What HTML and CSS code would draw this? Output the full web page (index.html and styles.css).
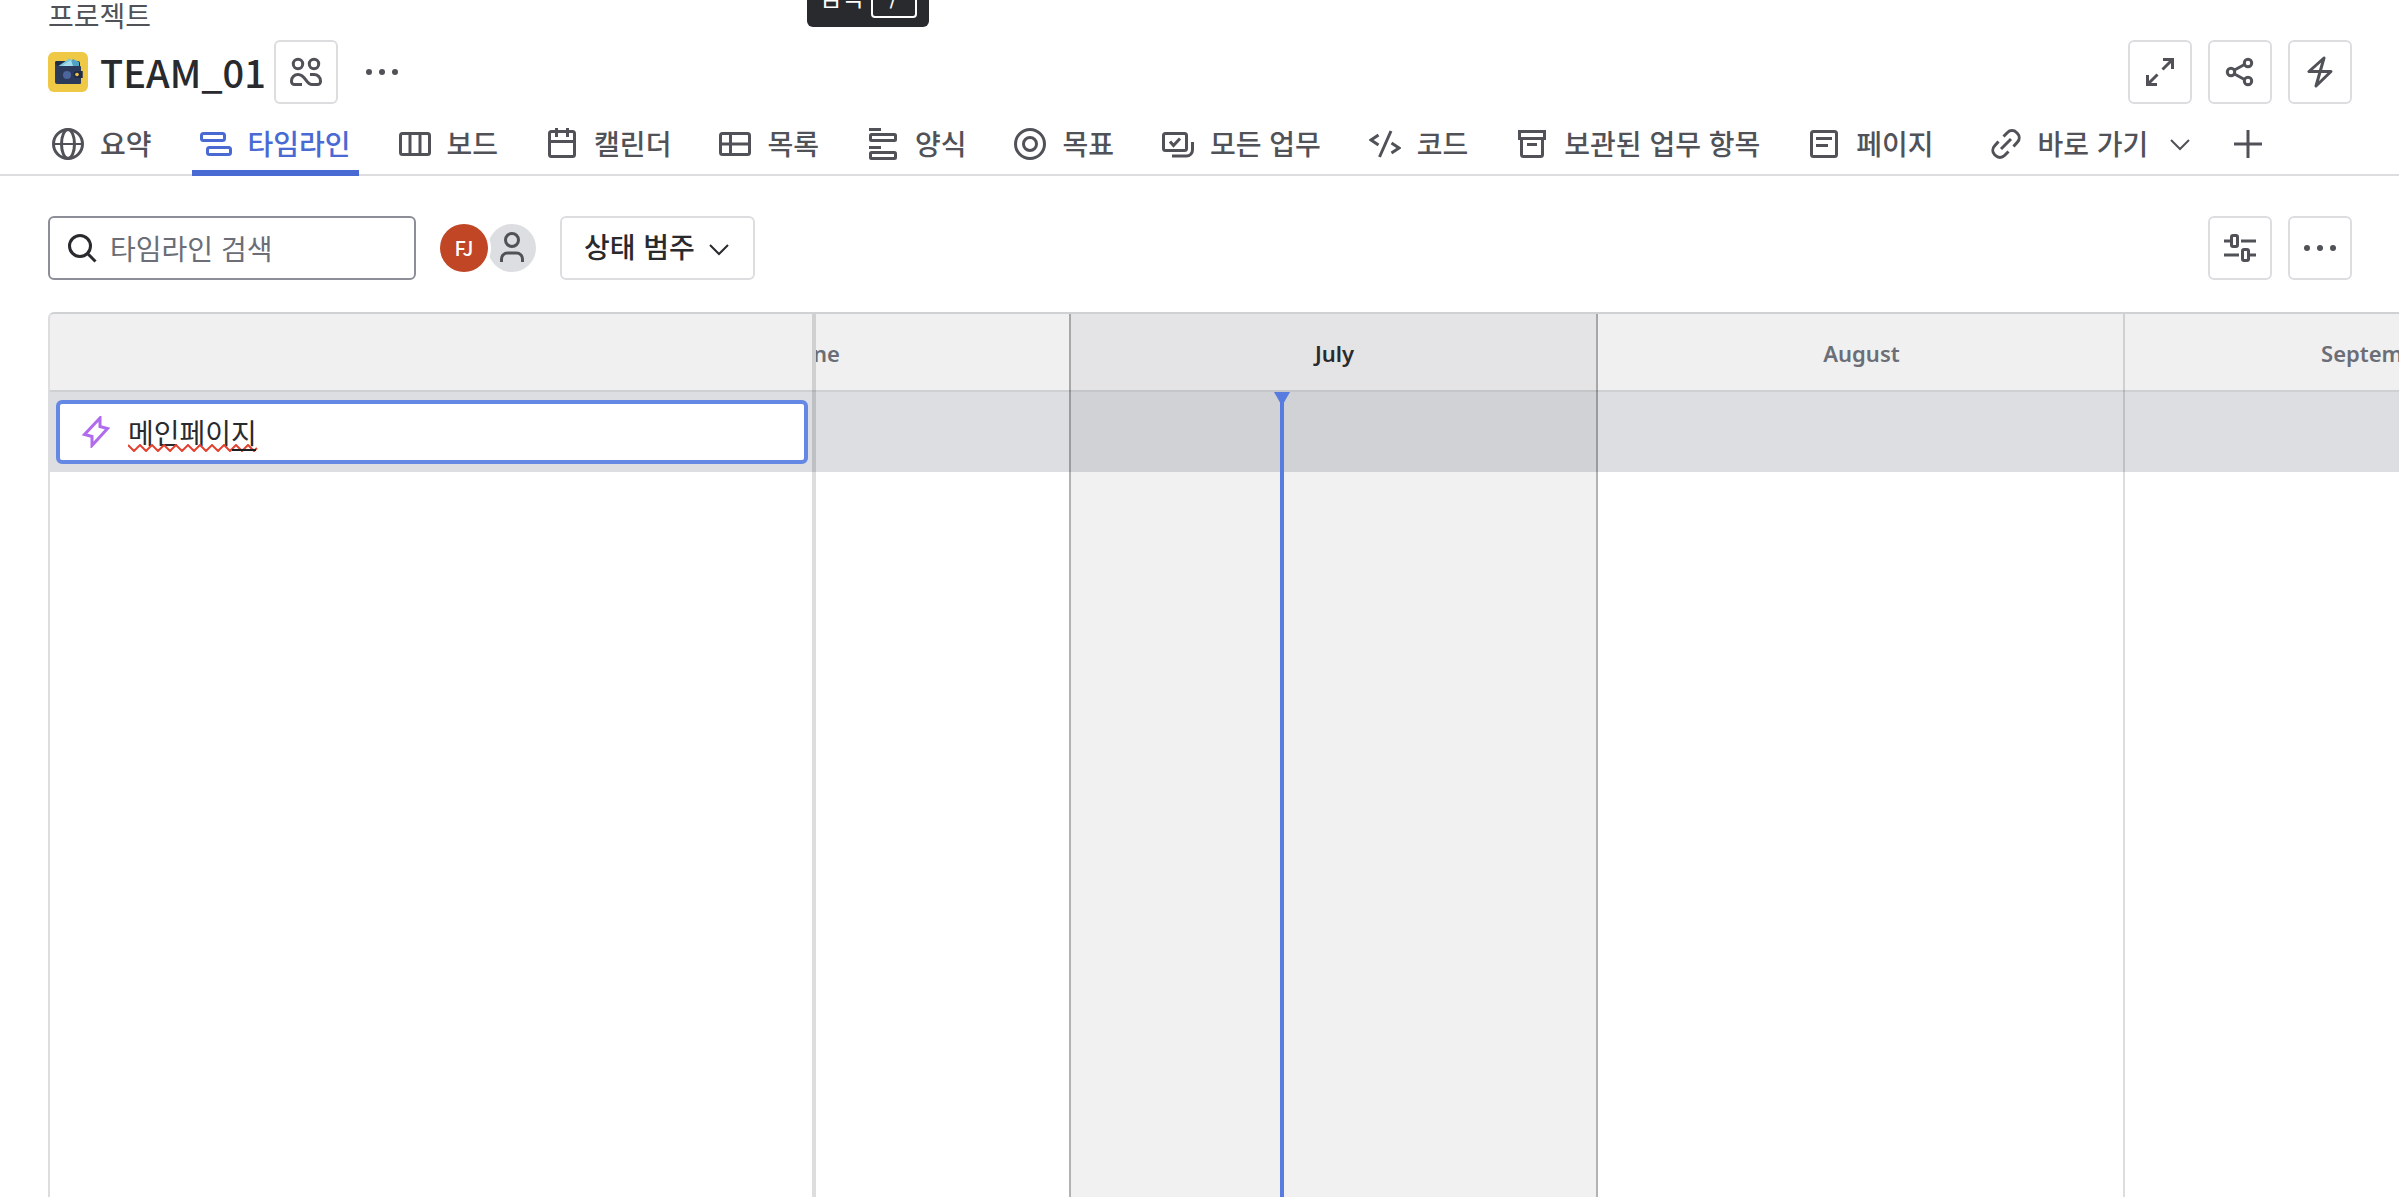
FILE: index.html
```html
<!DOCTYPE html>
<html lang="ko">
<head>
<meta charset="utf-8">
<title>TEAM_01 - 타임라인</title>
<meta name="viewport" content="width=device-width, initial-scale=1">
<link rel="stylesheet" href="styles.css">
</head>
<body>
<div class="page">
  <header class="header">
    <a class="crumb" href="#projects">프로젝트</a>
    <div class="title-row">
      <svg class="logo" viewBox="0 0 40 40" aria-hidden="true">
        <rect width="40" height="40" rx="6" fill="#efc846"/>
        <path d="M8 9h22a2 2 0 0 1 2 2v8H7v-8a2 2 0 0 1 1-2z" fill="#1d2b45"/>
        <path d="M9 15l13-9 3 8z" fill="#7cc5dc"/>
        <path d="M17 14l8-7 6 3v4z" fill="#4fa3c4"/>
        <path d="M14 14l9-6 2 6z" fill="#a5dceb"/>
        <path d="M7 12l3 2h22a1 1 0 0 1 1 1v4h1.500v7H33v5a1 1 0 0 1-1 1H9a2 2 0 0 1-2-2z" fill="#2b3a5b"/>
        <circle cx="19" cy="23" r="4" fill="#4c659c"/>
        <path d="M34.500 19H29a3.500 3.500 0 0 0 0 7h5.500z" fill="#1d2b45"/>
        <circle cx="29" cy="22.500" r="1.800" fill="#f2c14e"/>
      </svg>
      <h1 class="title">TEAM_01</h1>
      <button class="icon-btn" type="button" aria-label="팀">
        <svg class="icon" viewBox="0 0 32 32"><circle cx="8" cy="8" r="4.700"/><circle cx="24" cy="8" r="4.700"/><path d="M12 28.500H4.500a3 3 0 0 1-3-3V25A6.500 6.500 0 0 1 8 18.500c8 0 7.500 10 14 10h5.500a3 3 0 0 0 3-3V25a6.500 6.500 0 0 0-6.500-6.500h-4"/></svg>
      </button>
      <button class="icon-btn plain" type="button" aria-label="더 보기">
        <svg class="icon dots" viewBox="0 0 32 32"><circle cx="3" cy="16" r="3"/><circle cx="16" cy="16" r="3"/><circle cx="29" cy="16" r="3"/></svg>
      </button>
      <div class="actions">
        <button class="icon-btn" type="button" aria-label="전체 화면">
          <svg class="icon" viewBox="0 0 32 32"><path d="M19 3.500h9.500V13M28 4 18.500 13.500M3.500 19v9.500H13M4 28l9.500-9.500"/></svg>
        </button>
        <button class="icon-btn" type="button" aria-label="공유">
          <svg class="icon" viewBox="0 0 32 32"><circle cx="24" cy="7" r="3.700"/><circle cx="7" cy="16" r="3.700"/><circle cx="24" cy="25" r="3.700"/><path d="M10.500 14 20.500 8.500M10.500 18l10 5.500"/></svg>
        </button>
        <button class="icon-btn" type="button" aria-label="자동화">
          <svg class="icon round" viewBox="0 0 32 32"><path d="M20 2 5 15.500h22L12 30z"/></svg>
        </button>
      </div>
    </div>
    <nav class="tabs" aria-label="프로젝트 보기">
      <a class="tab" href="#summary"><svg class="icon" viewBox="0 0 32 32"><circle cx="16" cy="16" r="14.500"/><ellipse cx="16" cy="16" rx="6.500" ry="14.500"/><path class="thin" d="M2 16h28"/></svg>요약</a>
      <a class="tab active" href="#timeline" aria-current="page"><svg class="icon" viewBox="0 0 32 32"><rect x="1.500" y="5.500" width="23" height="7" rx="2"/><rect x="7.500" y="19.500" width="23" height="7" rx="2"/></svg>타임라인</a>
      <a class="tab" href="#board"><svg class="icon" viewBox="0 0 32 32"><rect x="1.500" y="5.500" width="29" height="21" rx="2"/><path d="M11 5v22M21 5v22"/></svg>보드</a>
      <a class="tab" href="#calendar"><svg class="icon" viewBox="0 0 32 32"><rect x="3.500" y="3.500" width="25" height="25" rx="2"/><path d="M10.500 0v9M21.500 0v9M3 13.500h26"/></svg>캘린더</a>
      <a class="tab" href="#list"><svg class="icon" viewBox="0 0 32 32"><rect x="1.500" y="5.500" width="29" height="21" rx="2"/><path d="M11.500 5v22M2 16h28"/></svg>목록</a>
      <a class="tab" href="#forms"><svg class="icon" viewBox="0 0 32 32"><path d="M2 1.500h12M2 19.500h12"/><rect x="3.500" y="6.500" width="25" height="6" rx="1"/><rect x="3.500" y="24.500" width="25" height="6" rx="1"/></svg>양식</a>
      <a class="tab" href="#goals"><svg class="icon" viewBox="0 0 32 32"><circle cx="16" cy="16" r="14.500"/><circle cx="16" cy="16" r="6.500"/></svg>목표</a>
      <a class="tab" href="#all"><svg class="icon" viewBox="0 0 32 32"><rect x="1.500" y="5.500" width="23" height="17" rx="2"/><path d="m8 13.500 3.500 4 6.500-7M30.500 14v8a6 6 0 0 1-6 6H10"/></svg>모든 업무</a>
      <a class="tab" href="#code"><svg class="icon" viewBox="0 0 32 32"><path d="M9.500 7 2 12l7.500 5M22 3 10.500 29M22.500 15l7.500 5-7.500 5"/></svg>코드</a>
      <a class="tab" href="#archive"><svg class="icon" viewBox="0 0 32 32"><rect x="3.500" y="3.500" width="25" height="7"/><path d="M5.500 11v15.500a2 2 0 0 0 2 2h17a2 2 0 0 0 2-2V11M11 16.500h10"/></svg>보관된 업무 항목</a>
      <a class="tab" href="#pages"><svg class="icon" viewBox="0 0 32 32"><rect x="3.500" y="3.500" width="25" height="25" rx="2"/><path d="M8 10.500h16M8 17.500h12"/></svg>페이지</a>
      <button class="tab shortcuts" type="button"><svg class="icon" viewBox="0 0 32 32"><path d="m13.500 8.500 4-4a6.200 6.200 0 0 1 9 0l1 1a6.200 6.200 0 0 1 0 8.500l-4 4.500M18.500 23.500l-4 4a6.200 6.200 0 0 1-9 0l-1-1a6.200 6.200 0 0 1 0-8.500l4-4.500M11 21 21 11"/></svg>바로 가기<svg class="icon chevron" viewBox="0 0 32 32"><path d="m7 12 9 9 9-9"/></svg></button>
      <button class="tab add" type="button" aria-label="보기 추가"><svg class="icon" viewBox="0 0 32 32"><path d="M16 2v28M2 16h28"/></svg></button>
    </nav>
    <div class="tooltip" role="tooltip">검색 <kbd class="key">/</kbd></div>
  </header>

  <main class="main">
    <div class="toolbar">
      <label class="search">
        <svg class="icon" viewBox="0 0 32 32" aria-hidden="true"><circle cx="14" cy="14" r="10.500"/><path d="m21.500 21.500 8 8"/></svg>
        <input class="search-input" type="search" placeholder="타임라인 검색" aria-label="타임라인 검색">
      </label>
      <div class="people">
        <button class="avatar user" type="button">FJ</button>
        <button class="avatar nobody" type="button" aria-label="할당되지 않음"><svg class="icon" viewBox="0 0 32 32"><circle cx="16" cy="8" r="6.500"/><path d="M5.500 30v-3a6 6 0 0 1 6-6h9a6 6 0 0 1 6 6v3"/></svg></button>
      </div>
      <button class="filter" type="button">상태 범주<svg class="icon chevron" viewBox="0 0 32 32"><path d="m7 12 9 9 9-9"/></svg></button>
      <div class="actions">
        <button class="icon-btn" type="button" aria-label="보기 설정">
          <svg class="icon" viewBox="0 0 32 32"><path d="M0 9h7M17 9h15M0 23h15M26 23h6"/><rect x="7.500" y="3.500" width="6" height="11" rx="1.500"/><rect x="18.500" y="17.500" width="6" height="11" rx="1.500"/></svg>
        </button>
        <button class="icon-btn" type="button" aria-label="더 보기">
          <svg class="icon dots" viewBox="0 0 32 32"><circle cx="3" cy="16" r="3"/><circle cx="16" cy="16" r="3"/><circle cx="29" cy="16" r="3"/></svg>
        </button>
      </div>
    </div>

    <section class="timeline" aria-label="타임라인">
      <div class="items">
        <div class="items-head"></div>
        <div class="item-row">
          <label class="editor">
            <svg class="icon epic" viewBox="0 0 32 32" aria-hidden="true"><path d="M20 2v8.500l7.500 2L12 29.500v-9l-7.500-2z"/></svg>
            <span class="field">
              <input class="editor-input" type="text" value="메인페이지" spellcheck="false" aria-label="에픽 이름">
              <svg class="squiggle" viewBox="0 0 130 8" aria-hidden="true"><path class="wave" d="M0 1l6 6 6-6 6 6 6-6 6 6 6-6 6 6 6-6 6 6 6-6 6 6 6-6 6 6 6-6 6 6 6-6 6 6 6-6 6 6 6-6 6 6 3-3"/><path class="composing" d="M104 6h24"/></svg>
            </span>
          </label>
        </div>
      </div>
      <div class="chart">
        <div class="months">
          <div class="month days-30"><span class="month-name">June</span></div>
          <div class="month days-31 current"><span class="month-name">July</span><span class="today"></span></div>
          <div class="month days-31"><span class="month-name">August</span></div>
          <div class="month days-30"><span class="month-name">September</span></div>
        </div>
      </div>
    </section>
  </main>
</div>
</body>
</html>
```
FILE: styles.css
```css
:root {
  --text: #292a2e;
  --subtle: #505258;
  --hint: #6b6e76;
  --brand: #4969d3;
  --border: #dddddf;
  --line: rgba(11, 12, 14, .14);
  --ui: "Liberation Sans", "Noto Sans CJK KR", sans-serif;
  --day: 17px;
}

* { box-sizing: border-box; }

body {
  margin: 0;
  background: #fff;
  color: var(--text);
  font: 400 28px/40px "Noto Sans CJK KR", sans-serif;
}

button, input { margin: 0; font: inherit; color: inherit; }
button { padding: 0; border: 0; background: none; cursor: pointer; }
a { color: inherit; text-decoration: none; }

.page {
  display: flex;
  flex-direction: column;
  min-height: 100vh;
  overflow: hidden;
}

.icon {
  flex: none;
  width: 32px;
  height: 32px;
  fill: none;
  stroke: currentColor;
  stroke-width: 3;
}
.icon.dots { fill: currentColor; stroke: none; }
.icon.round { stroke-linejoin: round; }
.icon.chevron, .thin { stroke-width: 2; }

/* Header */
.header {
  position: relative;
  border-bottom: 2px solid var(--border);
}

.crumb {
  display: block;
  height: 40px;
  padding-left: 48px;
  color: var(--subtle);
  line-height: 30px;
}

.title-row {
  display: flex;
  align-items: center;
  padding: 0 47px 0 48px;
}
.logo { width: 40px; height: 40px; }
.title {
  margin: 0 8px 0 12px;
  font-size: 38px;
  font-weight: 500;
  line-height: 64px;
}

.icon-btn {
  display: flex;
  align-items: center;
  justify-content: center;
  width: 64px;
  height: 64px;
  border: 2px solid var(--border);
  border-radius: 6px;
  color: var(--subtle);
}
.icon-btn.plain { margin-left: 12px; border-color: transparent; }

.actions { display: flex; gap: 16px; margin-left: auto; }

.tabs {
  display: flex;
  gap: 32px;
  height: 72px;
  margin-bottom: -2px;
  padding: 0 44px;
  color: var(--subtle);
  font-family: var(--ui);
  font-weight: 500;
  white-space: nowrap;
}
.tab {
  display: flex;
  flex: none;
  align-items: center;
  gap: 16px;
  padding: 18px 8px 0;
  border-bottom: 6px solid transparent;
}
.tab .icon { margin-bottom: 4px; }
.tab.active { border-color: var(--brand); color: var(--brand); }
.tab.shortcuts { margin-left: 8px; }
.tab.add { margin-left: -12px; }

.tooltip {
  position: absolute;
  top: -28px;
  left: 807px;
  display: flex;
  align-items: flex-start;
  gap: 8px;
  height: 55px;
  padding: 4px 12px 0;
  border-radius: 6px;
  background: var(--text);
  color: #fff;
  font-size: 24px;
}
.key {
  width: 46px;
  height: 38px;
  margin-top: 4px;
  border: 2px solid #fff;
  border-radius: 4px;
  font: inherit;
  line-height: 28px;
  text-align: center;
}

/* Toolbar */
.main {
  display: flex;
  flex: 1;
  flex-direction: column;
  padding-left: 48px;
}
.toolbar {
  display: flex;
  align-items: center;
  padding: 40px 47px 32px 0;
}
.search {
  display: flex;
  align-items: center;
  gap: 12px;
  width: 368px;
  height: 64px;
  padding: 0 16px;
  border: 2px solid #8c8f97;
  border-radius: 6px;
}
.search-input {
  flex: 1;
  min-width: 0;
  height: 40px;
  padding: 0;
  border: 0;
  outline: 0;
  background: none;
}
.search-input::placeholder { color: var(--hint); opacity: 1; }

.people { display: flex; margin: 0 24px; }
.avatar {
  display: flex;
  align-items: center;
  justify-content: center;
  width: 48px;
  height: 48px;
  border-radius: 50%;
}
.avatar.user {
  z-index: 1;
  background: #c14625;
  box-shadow: 0 0 0 3px #fff;
  color: #fff;
  font-size: 20px;
  font-weight: 500;
}
.avatar.nobody { background: #dddee1; color: var(--subtle); }

.filter {
  display: flex;
  align-items: center;
  gap: 8px;
  height: 64px;
  padding: 2px 18px 0 22px;
  border: 2px solid var(--border);
  border-radius: 6px;
  font-family: var(--ui);
  font-weight: 500;
}

/* Timeline */
.timeline {
  display: flex;
  flex: 1;
  border-top: 2px solid #d0d1d2;
  border-left: 2px solid var(--border);
  border-top-left-radius: 6px;
  /* header band, its rule, then the row being edited */
  background: linear-gradient(#f0f0f0 76px, #cfd0d1 76px 78px, #dddee2 78px 158px, #fff 158px);
  overflow: hidden;
}
.items {
  flex: none;
  width: 766px;
  border-right: 4px solid var(--line);
}
.items-head { height: 78px; }
.item-row { height: 80px; padding: 8px 4px 8px 6px; }
.editor {
  display: flex;
  align-items: center;
  gap: 16px;
  height: 64px;
  padding: 0 20px;
  border: 4px solid #6488e4;
  border-radius: 6px;
  background: #fff;
}
.epic { color: #b16ced; }
.field { position: relative; flex: 1; display: flex; }
.editor-input {
  width: 100%;
  height: 40px;
  padding: 0;
  border: 0;
  outline: 0;
  background: none;
}
.squiggle {
  position: absolute;
  left: 0;
  bottom: 0;
  width: 130px;
  height: 8px;
  fill: none;
  stroke-width: 2;
}
.wave { stroke: #e2412f; }
.composing { stroke: #1e1f21; }

.chart { flex: 1; min-width: 0; overflow: hidden; }
.months { display: flex; height: 100%; margin-left: -255px; }
.month {
  position: relative;
  flex: none;
  border-right: 2px solid var(--line);
  color: var(--hint);
  text-align: center;
}
.month:has(+ .current), .month.current { border-right-color: rgba(0, 0, 0, .3); }
.days-30 { width: calc(30 * var(--day)); }
.days-31 { width: calc(31 * var(--day)); }
.month.current {
  background: linear-gradient(rgba(0, 0, 40, .05) 78px, rgba(0, 0, 6, .055) 78px);
  background-clip: padding-box;
  color: var(--text);
}
.month-name {
  display: block;
  padding-left: 2px;
  font: 600 22px/78px "Noto Sans", sans-serif;
}

.today {
  position: absolute;
  top: 78px;
  bottom: 0;
  left: 40%;
  width: 4px;
  margin-left: -1px;
  background: #587be0;
}
.today::before {
  content: "";
  position: absolute;
  top: 0;
  left: -6px;
  border: 8px solid transparent;
  border-top: 14px solid #587be0;
  border-bottom: 0;
}
```
